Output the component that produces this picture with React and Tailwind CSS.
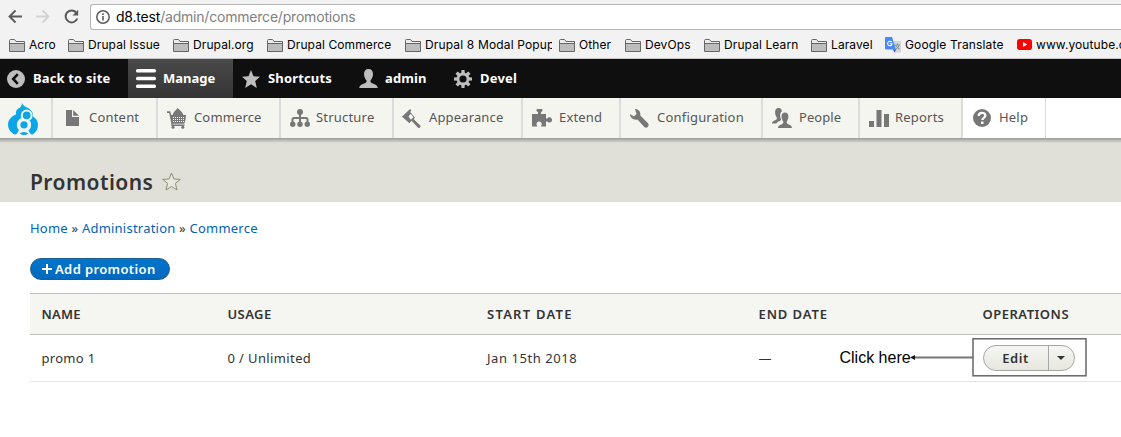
import React from "react";

const Svg = ({ w, h = w, vb, className = "", children }) => (
  <svg width={w} height={h} viewBox={vb || `0 0 ${w} ${h}`} className={`shrink-0 ${className}`} fill="currentColor">
    {children}
  </svg>
);

const Folder = () => (
  <Svg w={16} h={13} className="mt-px">
    <path d="M.5 12.500V1.500Q.5.5 1.500.5H5.500L7 2.500H15.500V12.500Z" fill="#ededed" stroke="#666" />
    <path d="M1 4.500H15V12H1Z" fill="#bdbdbd" />
    <path d="M1 4.500H15.500" stroke="#666" />
  </Svg>
);

const Translate = () => (
  <Svg w={16}>
    <path d="M6 4H15Q16 4 16 5V14.500Q16 15.500 15 15.500H9Z" fill="#d5d5d5" />
    <path d="M10 8H15M12.500 6.500V8M11 8.500Q12 11 14.500 12M14.200 8.500Q13 11 10.500 12.500" stroke="#7b8f99" fill="none" />
    <path d="M1 0H7L11 12.500H1Q0 12.500 0 11.500V1Q0 0 1 0Z" fill="#4a8af4" />
    <path d="M8 12.500H11L9.500 15.500Z" fill="#2a56c6" />
    <path d="M6.700 5Q5.700 4 4.400 4.300Q2.500 5 2.600 6.800Q3 8.800 4.800 8.800Q7 8.600 7 6.700H4.800" stroke="#fff" fill="none" strokeWidth="1.100" />
  </Svg>
);

const YouTube = () => (
  <Svg w={15} h={11}>
    <rect width="15" height="11" rx="2.800" fill="#f00" />
    <path d="M6 3.100 10.200 5.500 6 7.900Z" fill="#fff" />
  </Svg>
);

const bookmarks = [
  ["Acro", "w-[59px]", "tracking-[0px]"],
  ["Drupal Issue", "w-[105px]", "tracking-[0.1px]"],
  ["Drupal.org", "w-[94px]", "tracking-[0.1px]"],
  ["Drupal Commerce", "w-[138px]", "tracking-[0.1px]"],
  ["Drupal 8 Modal Popup", "w-[154px] pr-[7px]", "tracking-[0.15px]"],
  ["Other", "w-[66px]", "tracking-[0.1px]"],
  ["DevOps", "w-[79px]", "tracking-[0.1px]"],
  ["Drupal Learn", "w-[107px]", "tracking-[0.1px]"],
  ["Laravel", "w-[74px]", "tracking-[0.1px]"],
  ["Google Translate", "w-[131px]", "tracking-[0.15px]", Translate],
  ["www.youtube.com", "w-[130px] pl-px", "tracking-[0.1px]", YouTube],
];

const Browser = () => (
  <div className="h-[59px] border-b border-[#c9c9c9] bg-[#f2f2f2] font-['Inter',sans-serif] overflow-hidden">
    <div className="flex h-[30px] items-start pt-1">
      <div className="flex w-[90px] shrink-0 items-center pl-2 pt-[5px]">
        <Svg w={14} h={15} className="text-[#5a5a5a]">
          <path d="M14 7.500H1.500M7.500 1.500 1.500 7.500 7.500 13.500" fill="none" stroke="currentColor" strokeWidth="1.800" />
        </Svg>
        <Svg w={14} h={15} className="ml-[14px] text-[#d2d2d2]">
          <path d="M0 7.500H12.500M6.500 1.500 12.500 7.500 6.500 13.500" fill="none" stroke="currentColor" strokeWidth="1.800" />
        </Svg>
        <Svg w={15} className="ml-[14px] text-[#5a5a5a]">
          <path d="M12.600 4A6 6 0 1 0 13.300 9.500" fill="none" stroke="currentColor" strokeWidth="2" />
          <path d="M14.200.8V6.500H8.500Z" />
        </Svg>
      </div>
      <div className="flex h-[26px] flex-1 items-center rounded-l-[3px] border border-r-0 border-[#b4b4b4] bg-white pl-[5px]">
        <Svg w={14} className="text-[#5a5a5a]">
          <circle cx="7" cy="7" r="6.200" fill="none" stroke="currentColor" strokeWidth="1.500" />
          <path d="M6.200 6H7.800V10.600H6.200ZM6.200 3.300H7.800V4.900H6.200Z" />
        </Svg>
        <span className="ml-[6px] whitespace-nowrap text-sm leading-none tracking-[-0.2px] text-[#808080]">
          <span className="text-black">d8.test</span>/admin/commerce/promotions
        </span>
      </div>
    </div>
    <div className="flex h-[29px] w-[1200px] items-center pl-[9px]">
      {bookmarks.map(([name, w, track, Icon = Folder]) => (
        <div key={name} className={`flex shrink-0 items-center gap-1 overflow-hidden ${w}`}>
          <Icon />
          <span className={`overflow-hidden whitespace-nowrap text-[12px] leading-[20px] text-black ${track}`}>{name}</span>
        </div>
      ))}
    </div>
  </div>
);

const Back = () => (
  <Svg w={18}>
    <circle cx="9" cy="9" r="9" />
    <path d="M10.800 4.200 6.200 9 10.800 13.800" fill="none" stroke="#0f0f0f" strokeWidth="2.600" />
  </Svg>
);
const Menu = () => (
  <Svg w={20} h={19} className="text-white">
    <rect width="20" height="3.500" rx="1.500" />
    <rect y="7.700" width="20" height="3.500" rx="1.500" />
    <rect y="15.500" width="20" height="3.500" rx="1.500" />
  </Svg>
);
const Star = () => (
  <Svg w={18}>
    <path d="M9 0 11.500 6.300 18 6.800 13.200 11 14.800 18 9 14.200 3.200 18 4.800 11 0 6.800 6.500 6.300Z" />
  </Svg>
);
const User = () => (
  <Svg w={19} h={19}>
    <path d="M9.500 0C12.500 0 14 2 14 5C14 8 12.700 10 11.500 11.500V13C13 15 18.500 15 18.800 19H.2C.5 15 6 15 7.500 13V11.500C6.300 10 5 8 5 5C5 2 6.500 0 9.500 0Z" />
  </Svg>
);
const Gear = () => (
  <Svg w={18}>
    <circle cx="9" cy="9" r="5" fill="none" stroke="currentColor" strokeWidth="2.800" />
    {[0, 45, 90, 135, 180, 225, 270, 315].map((a) => (
      <path key={a} d="M7.500 0H10.500L10.800 3.500H7.200Z" transform={`rotate(${a} 9 9)`} />
    ))}
  </Svg>
);

const topItems = [
  ["Back to site", Back, "w-[128px] pl-[7px]", "ml-[8px]", "tracking-[0.15px]"],
  ["Manage", Menu, "w-[105px] pl-[8px] bg-linear-to-b from-[#4a4a4a] to-[#343434]", "ml-[7px]", "tracking-[0px]"],
  ["Shortcuts", Star, "w-[118px] pl-[9px]", "ml-[8px]", "tracking-[0.15px]"],
  ["admin", User, "w-[95px] pl-[8px]", "ml-[7px]", "tracking-[0.1px]"],
  ["Devel", Gear, "w-[90px] pl-[8px]", "ml-[8px]", "tracking-[0.2px]"],
];

const Druplet = () => (
  <Svg w={30} h={32} className="text-[#0aa6e8]">
    <path d="M14 0C15 2.500 17 3.500 20 5C23.500 7 25.500 10 25 13.500C28.500 15.500 30 18.500 30 22C30 26 28 29.500 24.500 31.500Q23 32 22 30L20 27H11L9 30.500Q7.500 32 5.500 31C2.500 29 0 26 0 22C0 17 3 13.500 8 11.500C7.500 8.500 8.500 6.500 10.500 5.500C12.500 4.500 13.700 3 14 0Z" />
    <circle cx="16" cy="21.800" r="5.400" fill="none" stroke="#f5f5f0" strokeWidth="3.600" />
    <circle cx="18.700" cy="12.300" r="4.900" fill="#0aa6e8" stroke="#f5f5f0" strokeWidth="2" />
    <path d="M11.500 30.500Q16 27.500 20.500 30.500Q16 33.500 11.500 30.500Z" />
  </Svg>
);

const DocIcon = () => (
  <Svg w={13} h={16}><path d="M0 0H6V7H13V16H0ZM7.200 0 13 5.800H7.200Z" /></Svg>
);
const CartIcon = () => (
  <Svg w={19} h={21}>
    <path d="M0 3.300H3.200L4.200 7H5.500C6.500 4 8.500 2.500 10.700 0C13 2.500 15.500 4 16.300 7H19L18.500 12 17.300 15.700H5.600V16.600H17.500V18H4.300V15.500L2.200 4.900H0Z" />
    <path d="M6 9.500H18M6 11.500H18M6 13.500H17" stroke="#f5f5f0" strokeDasharray="1 1" />
    <circle cx="6" cy="19.200" r="1.500" /><circle cx="15.800" cy="19.200" r="1.500" />
  </Svg>
);
const TreeIcon = () => (
  <Svg w={20} h={18}>
    <circle cx="10" cy="3" r="3" />
    <path d="M10 4V14M2.500 14V10.500Q2.500 9 4 9H16Q17.500 9 17.500 10.500V14" fill="none" stroke="currentColor" strokeWidth="2" />
    <circle cx="2.700" cy="15.300" r="2.700" /><circle cx="10" cy="15.300" r="2.700" /><circle cx="17.300" cy="15.300" r="2.700" />
  </Svg>
);
const BrushIcon = () => (
  <Svg w={19} h={19}>
    <path d="M0 7.700 8 0 9.300 1.300 8.300 3 12.800 8.600 11.800 10.300 18.800 17 17.500 19H16.300L9.500 11.800 7.500 14.300Z" />
    <path d="M6.500 7.500 8.800 4.800 11.500 8.200 8.800 10.700Z" fill="#f5f5f0" />
  </Svg>
);
const PuzzleIcon = () => (
  <Svg w={20} h={18}>
    <path d="M0 5H6V3C4 2.500 4 0 5.500 0H9.500C11 0 11 2.500 9 3V5H14V9.500H15.500C16 7.500 20 7.500 20 11C20 14 16 14 15.500 12.500H14V17.500H8.800C11 15 9 12.500 7 12.500C5 12.500 3.500 15 5.500 17.500H0Z" />
  </Svg>
);
const WrenchIcon = () => (
  <Svg w={19} h={19}>
    <path d="M5 0C8.500 0 11 3 10.300 6.500L18 14.200C20 17 17 19.800 14.500 18.200L7.500 10.500C4 11.500 0 9 0 5L4 7.500 6.500 5Z" />
  </Svg>
);
const PeopleIcon = () => (
  <Svg w={20} h={20}>
    <path d="M6.500 0C9 0 10 1.800 9.800 3.500C7.500 5 8 9 9 11V12C8 13.500 5 13.500 4.500 15.500H0C0 12.500 4 12.500 4.800 11V9.500C2.500 6.500 2 0 6.500 0Z" />
    <path d="M13 4.500C17.500 4.500 17 10.500 14.800 13.500V15C15.500 16.700 19.800 16.500 20 20H6C6.200 16.500 10.500 16.700 11.200 15V13.500C9 10.500 8.500 4.500 13 4.500Z" />
  </Svg>
);
const BarsIcon = () => (
  <Svg w={20} h={17}><path d="M0 11H5V17H0ZM7.500 0H12.500V17H7.500ZM15 4H20V17H15Z" /></Svg>
);
const HelpIcon = () => (
  <Svg w={18}>
    <circle cx="9" cy="9" r="9" />
    <path d="M5.700 7C5.700 2.800 12.300 2.800 12.300 6.500C12.300 8.800 9.300 8.800 9.300 11" fill="none" stroke="#fff" strokeWidth="2.300" />
    <path d="M8 12.500H10.500V15H8Z" fill="#fff" />
  </Svg>
);

const trayItems = [
  ["Content", DocIcon, "w-[105px] pl-[13px]", "ml-[10px]", "tracking-[0.2px]"],
  ["Commerce", CartIcon, "w-[123px] pl-[9px]", "ml-[8px]", "tracking-[0.15px]"],
  ["Structure", TreeIcon, "w-[113px] pl-[9px]", "ml-[6px]", "tracking-[0.2px]"],
  ["Appearance", BrushIcon, "w-[129px] pl-[8px]", "ml-[8px]", "tracking-[0.15px]"],
  ["Extend", PuzzleIcon, "w-[98px] pl-[9px]", "ml-[7px]", "tracking-[0.15px]"],
  ["Configuration", WrenchIcon, "w-[142px] pl-[9px]", "ml-[8px]", "tracking-[0.2px]"],
  ["People", PeopleIcon, "w-[97px] pl-[9px]", "ml-[7px]", "tracking-[0.05px]"],
  ["Reports", BarsIcon, "w-[103px] pl-[9px]", "ml-[6px]", "tracking-[0.2px]"],
];

const Toolbar = () => (
  <div className="font-['Noto_Sans',sans-serif] text-[13px]">
    <div className="flex h-[39px] bg-[#0f0f0f] font-bold text-white">
      {topItems.map(([name, Icon, box, gap, track]) => (
        <div key={name} className={`flex shrink-0 items-center text-[#bebebe] ${box}`}>
          <Icon />
          <span className={`whitespace-nowrap text-white ${gap} ${track}`}>{name}</span>
        </div>
      ))}
    </div>
    <div className="flex h-[40px] bg-white text-[#565656]">
      <div className="w-[53px] shrink-0 border-r-2 border-[#dcdcdc] bg-[#f5f5f0] pl-2 pt-[5px]"><Druplet /></div>
      {trayItems.map(([name, Icon, box, gap, track]) => (
        <div key={name} className={`flex shrink-0 items-center border-r-2 border-[#dcdcdc] bg-[#f5f5f0] text-[#777] ${box}`}>
          <Icon />
          <span className={`whitespace-nowrap text-[#565656] ${gap} ${track}`}>{name}</span>
        </div>
      ))}
      <div className="flex w-[83px] shrink-0 items-center border-r border-[#dcdcdc] pl-[10px] text-[#777]">
        <HelpIcon />
        <span className="ml-[8px] tracking-[0.2px] text-[#565656]">Help</span>
      </div>
    </div>
  </div>
);

const cols = "grid grid-cols-[186px_259.5px_271.500px_224px_1fr] items-center pl-[11.5px]";

export default function App() {
  return (
    <div className="h-[437px] w-full overflow-hidden bg-white font-['Noto_Sans',sans-serif] text-[13px] text-[#333]">
      <Browser />
      <Toolbar />
      <div className="h-[64px] bg-[#e0e0d8]">
        <div className="h-[5px] bg-linear-to-b from-[#999] to-[#e0e0d8]" />
        <div className="flex items-center pl-[30px] pt-[24px]">
          <h1 className="text-[21px] font-semibold leading-[30px] tracking-[0.45px]">Promotions</h1>
          <Svg w={19} h={19} className="ml-[9px] -mt-px">
            <path d="M9.500 1 11.900 7 18.300 7.400 13.400 11.400 15 18 9.500 14.500 4 18 5.600 11.400 .7 7.400 7.100 7Z" fill="#e8e8e0" stroke="#8d8d72" />
          </Svg>
        </div>
      </div>
      <div className="pl-[30px]">
        <div className="pt-[16px] leading-5 tracking-[0.22px]">
          <a className="text-[#0062b8]">Home</a> » <a className="text-[#0062b8]">Administration</a> » <a className="text-[#0062b8]">Commerce</a>
        </div>
        <button className="mt-[20px] flex h-[22px] w-[140px] items-center rounded-full border border-[#1e5c90] bg-linear-to-b from-[#0076cc] to-[#0069bd] pl-[11px] font-semibold text-white">
          <Svg w={10}><path d="M4 0H6V4H10V6H6V10H4V6H0V4H4Z" /></Svg>
          <span className="ml-[3px] mt-px whitespace-nowrap tracking-[0.38px]">Add promotion</span>
        </button>
        <div className={`mt-[13px] h-[42px] border-y border-[#bfbfba] bg-[#f5f5f2] pt-px text-[13px] font-semibold ${cols}`}>
          <span className="tracking-[0.2px]">NAME</span>
          <span className="tracking-[0.4px]">USAGE</span>
          <span className="tracking-[1.25px]">START DATE</span>
          <span className="tracking-[0.9px]">END DATE</span>
          <span className="tracking-[0.5px]">OPERATIONS</span>
        </div>
        <div className={`h-[47px] border-b border-[#e6e4df] ${cols}`}>
          <span className="pt-px tracking-[0.3px]">promo 1</span>
          <span className="pt-px tracking-[0.38px]">0 / Unlimited</span>
          <span className="pt-px tracking-[0.55px]">Jan 15th 2018</span>
          <div className="flex items-center">
            <span className="w-[81px] pt-px">—</span>
            <span className="whitespace-nowrap font-['Liberation_Sans',sans-serif] text-base text-black">Click here</span>
          </div>
          <div className="relative">
            <Svg w={178} h={40} className="pointer-events-none absolute -left-[73px] -top-[7px]">
              <path d="M5 19.500H63" stroke="#777" strokeWidth="2" />
              <path d="M0 19.500 5 17V22Z" fill="#111" />
              <rect x="63" y=".8" width="113" height="37" fill="none" stroke="#666" strokeWidth="1.500" />
            </Svg>
            <div className="flex h-[26px] w-[92px] rounded-full border border-[#a6a6a6] bg-linear-to-b from-[#f6f6f3] to-[#e7e7df] font-semibold">
              <span className="flex w-[65px] items-center justify-center border-r border-[#a6a6a6] pt-px tracking-[0.5px]">Edit</span>
              <span className="flex flex-1 items-center justify-center"><Svg w={8} h={4}><path d="M0 0H8L4 4Z" /></Svg></span>
            </div>
          </div>
        </div>
      </div>
    </div>
  );
}
